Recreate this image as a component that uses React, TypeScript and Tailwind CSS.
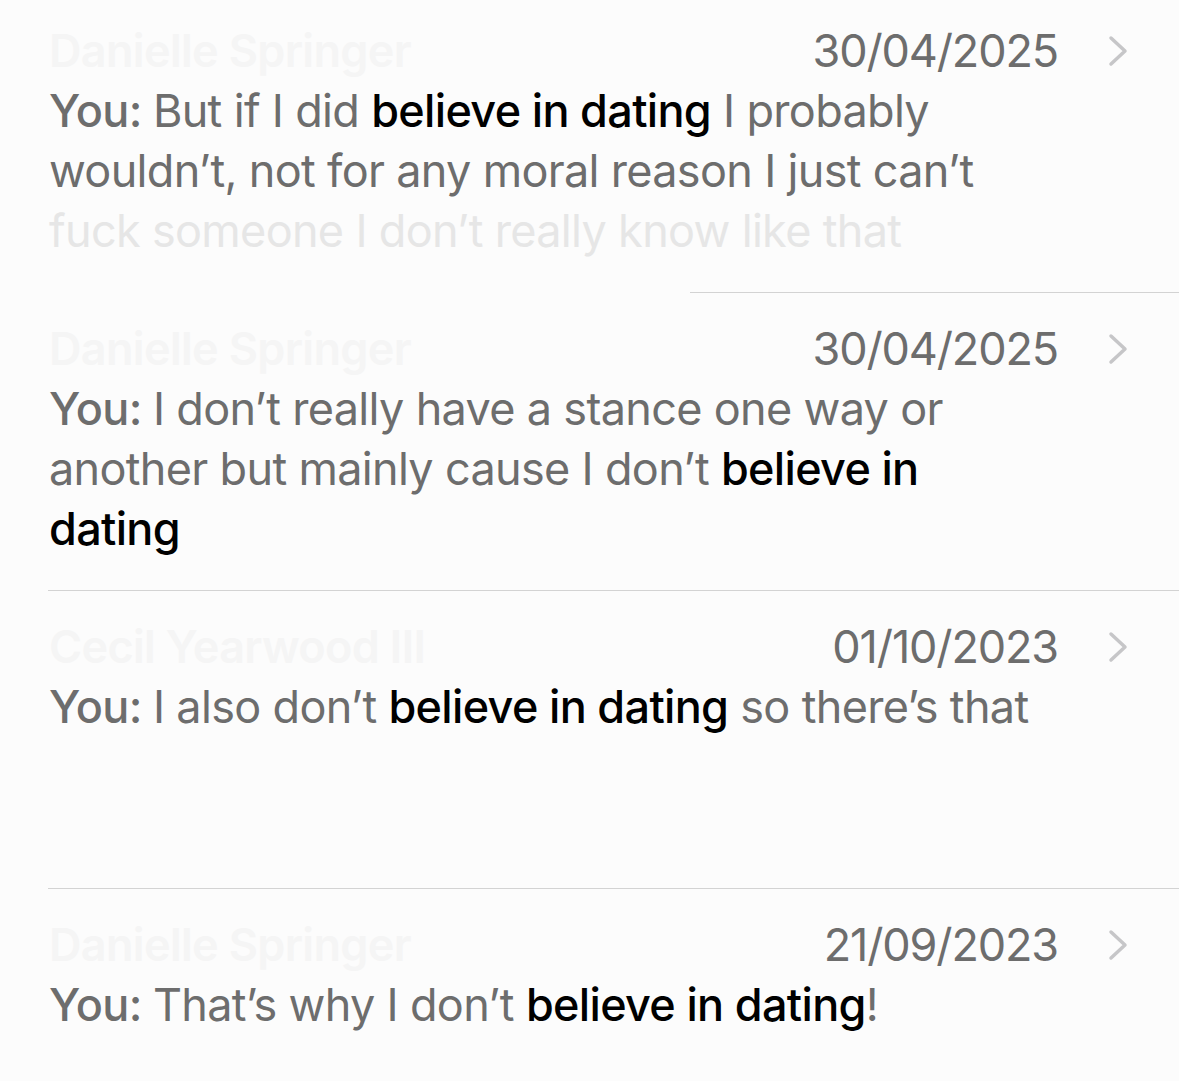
type Part = { text: string; hit?: boolean };

type Result = {
    id: number;
    name: string;
    date: string;
    lines: Part[][];
    faded?: Part[];
    sepClass: string;
};

const results: Result[] = [
    {
        id: 1,
        name: "Danielle Springer",
        date: "30/04/2025",
        lines: [
            [{ text: "But if I did " }, { text: "believe in dating", hit: true }, { text: " I probably" }],
            [{ text: "wouldn’t, not for any moral reason I just can’t" }],
        ],
        faded: [{ text: "fuck someone I don’t really know like that" }],
        sepClass: "ml-[690px]",
    },
    {
        id: 2,
        name: "Danielle Springer",
        date: "30/04/2025",
        lines: [
            [{ text: "I don’t really have a stance one way or" }],
            [{ text: "another but mainly cause I don’t " }, { text: "believe in", hit: true }],
            [{ text: "dating", hit: true }],
        ],
        sepClass: "ml-[48px]",
    },
    {
        id: 3,
        name: "Cecil Yearwood III",
        date: "01/10/2023",
        lines: [
            [{ text: "I also don’t " }, { text: "believe in dating", hit: true }, { text: " so there’s that" }],
        ],
        sepClass: "ml-[48px]",
    },
    {
        id: 4,
        name: "Danielle Springer",
        date: "21/09/2023",
        lines: [
            [{ text: "That’s why I don’t " }, { text: "believe in dating", hit: true }, { text: "!" }],
        ],
        sepClass: "hidden",
    },
];

const Chevron = () => (
    <svg width="24" height="32" viewBox="0 0 24 32" fill="none" className="shrink-0">
        <polyline
            points="5,3 19,16 5,29"
            stroke="#c6c6c8"
            strokeWidth="3.5"
            strokeLinecap="round"
            strokeLinejoin="round"
        />
    </svg>
);

const renderParts = (parts: Part[]) =>
    parts.map((p, i) =>
        p.hit ? (
            <span key={i} className="font-medium text-black">{p.text}</span>
        ) : (
            <span key={i}>{p.text}</span>
        )
    );

const ResultRow = ({ r }: { r: Result }) => (
    <div className="h-[298px] flex flex-col">
        <div className="flex-1 pt-[26px] pl-[49px] pr-[49px]">
            <div className="flex items-center h-[60px]">
                <span className="font-semibold text-[#f5f5f5] whitespace-nowrap">{r.name}</span>
                <span className="ml-auto text-[#6d6d6d] tracking-[-0.025em]">{r.date}</span>
                <span className="ml-[48px]"><Chevron /></span>
            </div>
            <div className="text-[#6d6d6d]">
                {r.lines.map((line, i) => (
                    <div key={i} className="whitespace-nowrap">
                        {i === 0 && <span className="font-medium">You: </span>}
                        {renderParts(line)}
                    </div>
                ))}
                {r.faded && (
                    <div className="whitespace-nowrap text-[#e6e6e6]">{renderParts(r.faded)}</div>
                )}
            </div>
        </div>
        <div className={`h-px bg-[#d3d3d3] ${r.sepClass}`}></div>
    </div>
);

export default function App() {
    return (
        <div
            className="w-[1179px] h-[1081px] overflow-hidden bg-[#fcfcfc] text-[45px] leading-[60px] tracking-[-0.015em]"
            style={{ fontFamily: "Inter, 'Noto Sans', sans-serif" }}
        >
            <div className="-mt-[5px]">
                {results.map((r) => (
                    <ResultRow key={r.id} r={r} />
                ))}
            </div>
        </div>
    );
}
